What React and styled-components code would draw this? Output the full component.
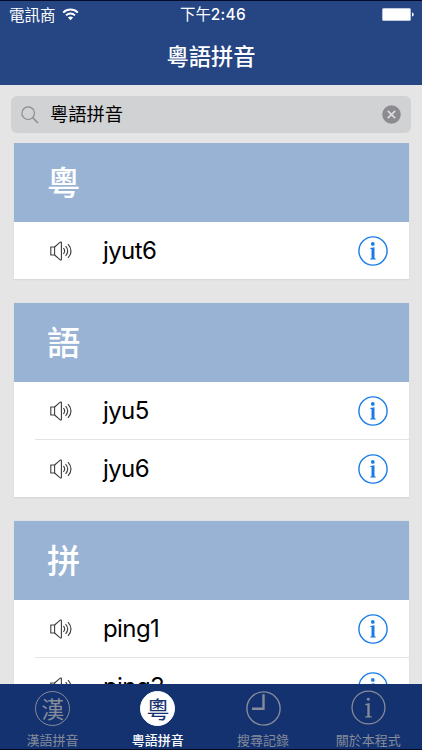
import React, { useState } from 'react'
import styled, { createGlobalStyle } from 'styled-components'

const GlobalStyle = createGlobalStyle`
  * {
    box-sizing: border-box;
  }

  body {
    margin: 0;
    font-family: Inter, "Noto Sans CJK TC", sans-serif;
  }

  svg {
    display: block;
    flex-shrink: 0;
  }`

const entries = [
    { character: "粵", readings: ["jyut6"] },
    { character: "語", readings: ["jyu5", "jyu6"] },
    { character: "拼", readings: ["ping1", "ping3"] },
]

const tabs = [
    { id: "mandarin", label: "漢語拼音" },
    { id: "cantonese", label: "粵語拼音" },
    { id: "history", label: "搜尋記錄" },
    { id: "about", label: "關於本程式" },
]

const Screen = styled.div`
  display: flex;
  flex-direction: column;
  width: 422px;
  height: 750px;
  overflow: hidden;
  background-color: #e5e5e6;
  border-bottom: 1px solid #040a1c;`

const Header = styled.header`
  flex: none;
  height: 85px;
  background-color: #254583;
  border-top: 1px solid #050a28;
  color: white;`

const StatusBar = styled.div`
  display: grid;
  grid-template-columns: 1fr auto 1fr;
  align-items: center;
  height: 27px;
  padding: 0 8px 0 9px;`

const Carrier = styled.div`
  display: flex;
  align-items: center;
  gap: 6px;
  font-family: "Noto Sans CJK TC", sans-serif;
  font-size: 15.5px;
  line-height: 25px;`

const Clock = styled.div`
  padding-left: 3px;
  font-size: 15.4px;
  font-weight: 400;
  line-height: 25px;`

const Digits = styled.span`
  font-weight: 500;
  letter-spacing: 0.3px;`

const Battery = styled.div`
  display: flex;
  align-items: center;
  justify-content: flex-end;`

const Title = styled.h1`
  margin: 0;
  height: 57px;
  font-family: "Noto Sans CJK TC", sans-serif;
  font-size: 22.3px;
  font-weight: 500;
  line-height: 55px;
  text-align: center;`

const SearchField = styled.div`
  flex: none;
  display: flex;
  align-items: center;
  height: 37px;
  margin: 11px 11px 10px;
  padding: 0 10px;
  border-radius: 6px;
  background-color: #d1d2d4;`

const SearchText = styled.div`
  flex-grow: 1;
  height: 37px;
  margin-left: 11px;
  font-family: "Noto Sans CJK TC", sans-serif;
  font-size: 18.3px;
  line-height: 34px;
  color: black;`

const Results = styled.main`
  flex: 1;
  min-height: 0;
  display: flex;
  flex-direction: column;
  gap: 23px;
  padding: 0 13.5px;
  overflow: hidden;`

const Card = styled.section`
  flex: none;
  background-color: white;
  border: solid #d9d9da;
  border-width: 0 0 1px;
  box-shadow: 0 0 1px #c9ccd0;`

const CardHeading = styled.h2`
  margin: 0;
  height: 79px;
  padding-left: 33.5px;
  background-color: #98b3d4;
  color: white;
  font-family: "Noto Sans CJK TC", sans-serif;
  font-size: 33.3px;
  font-weight: 500;
  line-height: 76px;`

const Reading = styled.div`
  display: flex;
  align-items: center;
  height: ${({ $last }) => $last ? 57 : 58}px;
  margin-left: 21px;
  padding: 0 20.5px 0 15.5px;
  border-bottom: ${({ $last }) => $last ? "none" : "1px solid #e3e3e4"};`

const ReadingText = styled.span`
  flex-grow: 1;
  margin-left: 30px;
  font-size: 24px;
  letter-spacing: -0.6px;
  line-height: 57px;
  color: black;`

const TabBar = styled.nav`
  flex: none;
  display: flex;
  justify-content: space-between;
  height: 65px;
  background-color: #14326f;`

const Tab = styled.div`
  flex: 1;
  display: flex;
  flex-direction: column;
  align-items: center;
  padding-top: ${({ $raised }) => $raised ? 6 : 7}px;
  padding-right: ${({ $raised }) => $raised ? 1 : 0}px;
  color: ${({ $active }) => $active ? "white" : "#858b9b"};
  cursor: pointer;`

const TabLabel = styled.span`
  margin-top: ${({ $raised }) => $raised ? 6 : 5}px;
  font-family: "Noto Sans CJK TC", sans-serif;
  font-size: 13px;
  font-weight: ${({ $active }) => $active ? 500 : 400};
  line-height: 18px;
  white-space: nowrap;`

const CircleGlyph = styled.div`
  display: flex;
  align-items: center;
  justify-content: center;
  width: 35px;
  height: 35px;
  border: 1.5px solid currentColor;
  border-radius: 50%;
  background-color: ${({ $active }) => $active ? "white" : "transparent"};

  span {
    height: 24px;
    color: ${({ $active }) => $active ? "#14326f" : "inherit"};
    font-family: "Noto Sans CJK TC", sans-serif;
    font-size: 23px;
    font-weight: 400;
    line-height: 22px;
  }`

const WifiIcon = () => (
    <svg width="17" height="13" viewBox="0 0 17 13" fill="none" stroke="white" strokeWidth="2">
        <path d="M1.2 4.6C5.2 .6 11.8 .6 15.8 4.6" />
        <path d="M4 7.4C6.5 4.9 10.5 4.9 13 7.4" />
        <path d="M5.9 9.5C7.3 8 9.7 8 11.1 9.5L8.5 12.2Z" fill="white" stroke="none" />
    </svg>
)

const BatteryIcon = () => (
    <svg width="32" height="13" viewBox="0 0 32 13">
        <rect x="0" y="0" width="29" height="13" rx="1.5" fill="#a9b7d3" />
        <rect x=".8" y=".8" width="27.4" height="11.4" rx="1" fill="white" />
        <path d="M30 4.5C32.3 5 32.3 8 30 8.5Z" fill="white" />
    </svg>
)

const SearchIcon = () => (
    <svg width="18" height="18" viewBox="0 0 18 18" fill="none" stroke="#8c8d92" strokeWidth="1.2">
        <circle cx="7.2" cy="7.2" r="6.3" />
        <path d="M11.8 11.8L17 17" strokeWidth="1.6" />
    </svg>
)

const ClearIcon = () => (
    <svg width="19" height="19" viewBox="0 0 19 19">
        <circle cx="9.5" cy="9.5" r="9.3" fill="#8b8b90" />
        <path d="M5.8 5.8L13.2 13.2M13.2 5.8L5.8 13.2" stroke="#d9dadc" strokeWidth="1.8" />
    </svg>
)

const SpeakerIcon = () => (
    <svg width="23" height="20" viewBox="0 0 23 20" fill="none" stroke="#3c3c3c" strokeWidth="1.1">
        <path d="M.8 6H4.6V14H.8Z" />
        <path d="M4.6 6L10.2 1.2Q11.4 .4 11.4 2V18Q11.4 19.6 10.2 18.8L4.6 14" />
        <path d="M13.4 7.2Q16 10 13.4 12.8M15.6 5.2Q19.8 10 15.6 14.8M18 3.2Q24 10 18 16.8" />
    </svg>
)

// Round outline with a serif "i" in it
const InfoIcon = ({ size = 30, color = "#187ce6", stem = 3, line = 1.4 }) => (
    <svg width={size} height={size} viewBox="0 0 30 30" fill={color}>
        <circle cx="15" cy="15" r="14.1" fill="none" stroke={color} strokeWidth={line} />
        <circle cx="14.8" cy="7.9" r={stem * 0.62} />
        <path d={`M12.2 12L${15 + stem / 2} 11.2V22.3L17.8 22.7V23.5H12.2V22.7L${15 - stem / 2} 22.3V13L12.2 12.8Z`} />
    </svg>
)

const ClockIcon = () => (
    <svg width="35" height="35" viewBox="0 0 35 35" fill="none" stroke="currentColor">
        <circle cx="17.5" cy="17.5" r="16.6" strokeWidth="1.4" />
        <path d="M17.5 3.2V17.8H6" strokeWidth="2.4" />
    </svg>
)

const TabIcon = ({ id, active }) => {
    if (id === "history") return <ClockIcon />
    if (id === "about") return <InfoIcon size={35} color="currentColor" stem={2} line={1.1} />
    return (
        <CircleGlyph $active={active}>
            <span>{id === "mandarin" ? "漢" : "粵"}</span>
        </CircleGlyph>
    )
}

const Entry = ({ character, readings }) => (
    <Card>
        <CardHeading>{character}</CardHeading>
        {readings.map((reading, i) => (
            <Reading key={reading} $last={i === readings.length - 1}>
                <SpeakerIcon />
                <ReadingText>{reading}</ReadingText>
                <InfoIcon />
            </Reading>
        ))}
    </Card>
)

const App = () => {

    const [activeTab, setActiveTab] = useState("cantonese");

    return (
        <Screen>
            <GlobalStyle />
            <Header>
                <StatusBar>
                    <Carrier>電訊商<WifiIcon /></Carrier>
                    <Clock>下午<Digits>2:46</Digits></Clock>
                    <Battery><BatteryIcon /></Battery>
                </StatusBar>
                <Title>粵語拼音</Title>
            </Header>
            <SearchField>
                <SearchIcon />
                <SearchText>粵語拼音</SearchText>
                <ClearIcon />
            </SearchField>
            <Results>
                {entries.map(entry => <Entry key={entry.character} {...entry} />)}
            </Results>
            <TabBar>
                {tabs.map(({ id, label }) => (
                    <Tab
                        key={id}
                        $active={id === activeTab}
                        $raised={id === "about"}
                        onClick={() => setActiveTab(id)}
                    >
                        <TabIcon id={id} active={id === activeTab} />
                        <TabLabel $active={id === activeTab} $raised={id === "about"}>{label}</TabLabel>
                    </Tab>
                ))}
            </TabBar>
        </Screen>
    );
};

export default App;
